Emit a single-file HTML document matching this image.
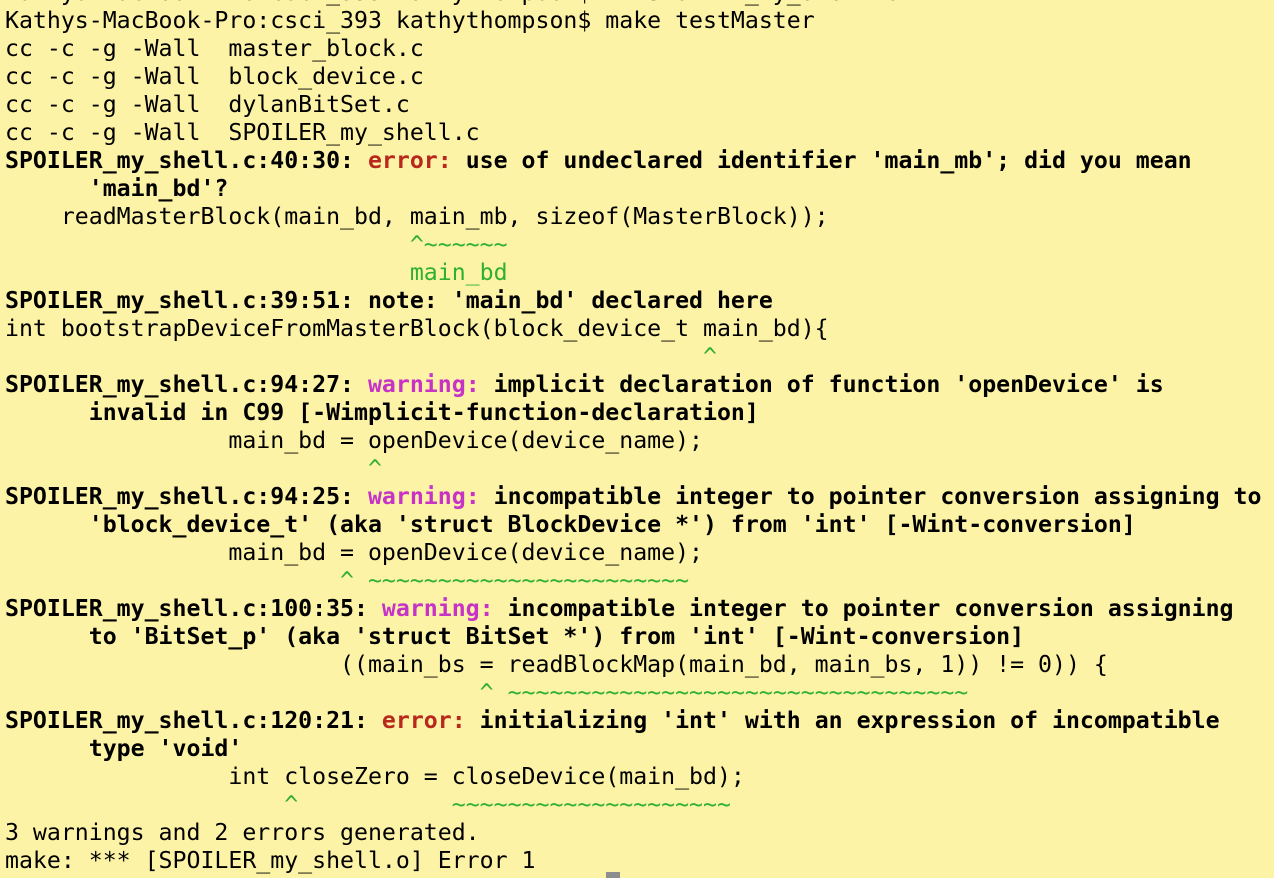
<!DOCTYPE html>
<html><head><meta charset="utf-8"><style>
html,body{margin:0;padding:0;}
body{width:1274px;height:878px;overflow:hidden;background:#fdf3a6;position:relative;}
pre{position:absolute;left:5px;top:-21px;margin:0;font-family:"DejaVu Sans Mono","Liberation Mono",monospace;font-size:23.2px;line-height:28px;color:#000;white-space:pre;}
b{font-weight:bold}
.e{color:#b8281c;font-weight:bold}
.w{color:#c633c6;font-weight:bold}
.g{color:#2fb02f}
#cur{position:absolute;left:606px;top:872px;width:14px;height:6px;background:#8e8e8e}
</style></head><body>
<pre>Kathys-MacBook-Pro:csci_393 kathythompson$ vi SPOILER_my_shell.c
Kathys-MacBook-Pro:csci_393 kathythompson$ make testMaster
cc -c -g -Wall  master_block.c
cc -c -g -Wall  block_device.c
cc -c -g -Wall  dylanBitSet.c
cc -c -g -Wall  SPOILER_my_shell.c
<b>SPOILER_my_shell.c:40:30: </b><span class="e">error:</span><b> use of undeclared identifier 'main_mb'; did you mean</b>
<b>      'main_bd'?</b>
    readMasterBlock(main_bd, main_mb, sizeof(MasterBlock));
                             <span class="g">^~~~~~~</span>
                             <span class="g">main_bd</span>
<b>SPOILER_my_shell.c:39:51: note: </b><b>'main_bd' declared here</b>
int bootstrapDeviceFromMasterBlock(block_device_t main_bd){
                                                  <span class="g">^</span>
<b>SPOILER_my_shell.c:94:27: </b><span class="w">warning:</span><b> implicit declaration of function 'openDevice' is</b>
<b>      invalid in C99 [-Wimplicit-function-declaration]</b>
                main_bd = openDevice(device_name);
                          <span class="g">^</span>
<b>SPOILER_my_shell.c:94:25: </b><span class="w">warning:</span><b> incompatible integer to pointer conversion assigning to</b>
<b>      'block_device_t' (aka 'struct BlockDevice *') from 'int' [-Wint-conversion]</b>
                main_bd = openDevice(device_name);
                        <span class="g">^ ~~~~~~~~~~~~~~~~~~~~~~~</span>
<b>SPOILER_my_shell.c:100:35: </b><span class="w">warning:</span><b> incompatible integer to pointer conversion assigning</b>
<b>      to 'BitSet_p' (aka 'struct BitSet *') from 'int' [-Wint-conversion]</b>
                        ((main_bs = readBlockMap(main_bd, main_bs, 1)) != 0)) {
                                  <span class="g">^ ~~~~~~~~~~~~~~~~~~~~~~~~~~~~~~~~~</span>
<b>SPOILER_my_shell.c:120:21: </b><span class="e">error:</span><b> initializing 'int' with an expression of incompatible</b>
<b>      type 'void'</b>
                int closeZero = closeDevice(main_bd);
                    <span class="g">^</span>           <span class="g">~~~~~~~~~~~~~~~~~~~~</span>
3 warnings and 2 errors generated.
make: *** [SPOILER_my_shell.o] Error 1
</pre>
<div id="cur"></div>
</body></html>
